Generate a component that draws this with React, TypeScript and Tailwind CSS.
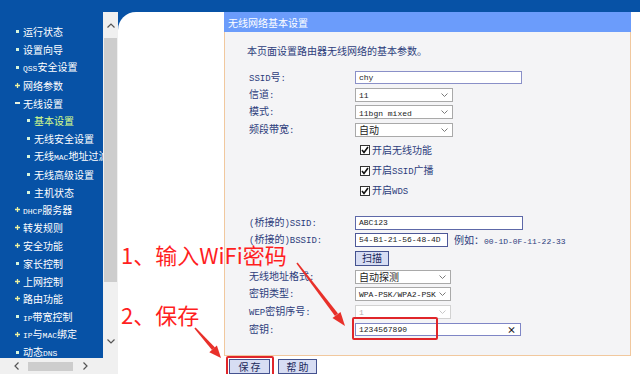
import React from "react";

type NavItem = { t: string; k: "dot" | "plus" | "minus" | "sub"; active?: boolean };

const nav: NavItem[] = [
  { t: "运行状态", k: "dot" },
  { t: "设置向导", k: "dot" },
  { t: "QSS安全设置", k: "dot" },
  { t: "网络参数", k: "plus" },
  { t: "无线设置", k: "minus" },
  { t: "基本设置", k: "sub", active: true },
  { t: "无线安全设置", k: "sub" },
  { t: "无线MAC地址过滤", k: "sub" },
  { t: "无线高级设置", k: "sub" },
  { t: "主机状态", k: "sub" },
  { t: "DHCP服务器", k: "plus" },
  { t: "转发规则", k: "plus" },
  { t: "安全功能", k: "plus" },
  { t: "家长控制", k: "dot" },
  { t: "上网控制", k: "plus" },
  { t: "路由功能", k: "plus" },
  { t: "IP带宽控制", k: "dot" },
  { t: "IP与MAC绑定", k: "plus" },
  { t: "动态DNS", k: "dot" },
];

function Mix({ s, latin }: { s: string; latin: string }) {
  const parts = s.split(/([\x20-\x7E]+)/).filter((p) => p.length > 0);
  return (
    <span className="whitespace-nowrap">
      {parts.map((p, i) =>
        /[\x20-\x7E]/.test(p) ? (
          <span key={i} className={latin + " whitespace-pre"}>
            {p}
          </span>
        ) : (
          <span key={i}>{p}</span>
        )
      )}
    </span>
  );
}

const LBL = "font-['Liberation_Mono',monospace] text-[9px]";
const INP = "font-['Liberation_Mono',monospace] text-[8px]";
const NAVL = "font-['Liberation_Mono',monospace] text-[8px]";

function Chevron({ color = "#7a7a7a" }: { color?: string }) {
  return (
    <svg width="7" height="4" viewBox="0 0 7 4" className="shrink-0">
      <polyline points="0.5,0.5 3.5,3.5 6.5,0.5" fill="none" stroke={color} strokeWidth="1" />
    </svg>
  );
}

function Check() {
  return (
    <span className="w-[10px] h-[10px] border border-[#333] bg-white flex items-center justify-center shrink-0 ml-[5px] mr-[2px]">
      <svg width="8" height="8" viewBox="0 0 8 8">
        <polyline points="1,4 3,6.5 7,1" fill="none" stroke="#111" strokeWidth="1.6" />
      </svg>
    </span>
  );
}

function Row({ h, label, children }: { h: string; label?: string; children?: React.ReactNode }) {
  return (
    <div className={"flex items-center " + h}>
      <div className="w-[108px] pl-[2px] shrink-0 whitespace-nowrap">{label ? <Mix s={label} latin={LBL} /> : null}</div>
      {children}
    </div>
  );
}

function Sel({ w, text, disabled }: { w: string; text: string; disabled?: boolean }) {
  return (
    <div
      className={
        w +
        " h-[14px] border bg-white flex items-center justify-between pl-[3px] pr-[4px] " +
        (disabled ? "border-[#d2d2d2] text-[#b0b0b0]" : "border-[#a9a9a9] text-[#222]")
      }
    >
      <span className="whitespace-nowrap leading-none">
        <Mix s={text} latin={INP} />
      </span>
      <Chevron color={disabled ? "#c8c8c8" : "#7a7a7a"} />
    </div>
  );
}

function Btn({ w, children }: { w: string; children: React.ReactNode }) {
  return (
    <div className={w + " h-[15px] bg-[#d7ddf3] border border-[#44528f] flex items-center justify-center text-[#1d2a5c] text-[10px] leading-none"}>
      {children}
    </div>
  );
}

export default function App() {
  return (
    <div className="relative w-[640px] h-[374px] overflow-hidden bg-[#0752a6] flex flex-col font-['Noto_Sans_CJK_SC',sans-serif]">
      <div className="h-[12px] shrink-0" />
      <div className="flex flex-1 min-h-0">
        {/* sidebar */}
        <div className="w-[103px] shrink-0 flex flex-col">
          <nav className="flex-1 overflow-hidden pt-[11px] text-[10px] text-white">
            {nav.map((n, i) => (
              <div key={i} className={"h-[17.8px] flex items-center whitespace-nowrap " + (n.k === "sub" ? "pl-[26px]" : "pl-[15px]")}>
                <span className="w-[8px] flex items-center shrink-0">
                  {n.k === "dot" || n.k === "sub" ? (
                    <span className="w-[3px] h-[3px] bg-[#d6f5dc] ml-[1px]" />
                  ) : n.k === "plus" ? (
                    <svg width="5" height="5" viewBox="0 0 5 5">
                      <path d="M2.5 0V5M0 2.5H5" stroke="#eef3a0" strokeWidth="1.3" />
                    </svg>
                  ) : (
                    <span className="w-[5px] h-[1.3px] bg-[#e8f3e0]" />
                  )}
                </span>
                <span className={n.active ? "text-[#d8ff8a]" : ""}>
                  <Mix s={n.t} latin={NAVL} />
                </span>
              </div>
            ))}
          </nav>
          <div className="h-[16px] shrink-0 bg-[#f0f0f0] flex items-center">
            <svg width="5" height="8" viewBox="0 0 5 8" className="ml-[14px]">
              <polyline points="4.5,0.5 1,4 4.5,7.5" fill="none" stroke="#555" strokeWidth="1.2" />
            </svg>
            <div className="ml-[9px] w-[45px] h-[9px] bg-[#cdcdcd]" />
            <svg width="5" height="8" viewBox="0 0 5 8" className="ml-[10px]">
              <polyline points="0.5,0.5 4,4 0.5,7.5" fill="none" stroke="#555" strokeWidth="1.2" />
            </svg>
          </div>
        </div>
        {/* vertical scrollbar */}
        <div className="w-[15px] shrink-0 flex flex-col bg-[#f0f0f0]">
          <div className="h-[26px] flex items-center justify-center">
            <svg width="8" height="5" viewBox="0 0 8 5">
              <polyline points="0.5,4.5 4,1 7.5,4.5" fill="none" stroke="#555" strokeWidth="1.2" />
            </svg>
          </div>
          <div className="h-[244px] mx-[1px] bg-[#cdcdcd]" />
          <div className="flex-1" />
          <div className="h-[22px] flex items-center justify-center">
            <svg width="8" height="5" viewBox="0 0 8 5">
              <polyline points="0.5,0.5 4,4 7.5,0.5" fill="none" stroke="#555" strokeWidth="1.2" />
            </svg>
          </div>
          <div className="h-[22px]" />
        </div>
        {/* main */}
        <div className="flex-1 bg-white rounded-tl-[18px] flex">
          <div className="w-[106px] shrink-0" />
          <div className="w-[407px] shrink-0 flex flex-col">
            <div className="h-[20px] bg-[#6b9cfb] text-white text-[10px] flex items-center pl-[4px] shrink-0">无线网络基本设置</div>
            <div className="h-[324px] shrink-0 border-x border-b border-[#f1c89e] bg-[#f4f4f6] pl-[22px] flex flex-col text-[10px] text-[#2d3d7c]">
              <div className="h-[18px] mt-[9px] flex items-center">本页面设置路由器无线网络的基本参数。</div>
              <div className="h-[10px]" />
              <Row h="h-[17px]" label="SSID号:">
                <div className="w-[167px] h-[13px] border border-[#8a90c8] bg-white flex items-center pl-[3px] text-[#222]">
                  <span className={INP}>chy</span>
                </div>
              </Row>
              <Row h="h-[17px]" label="信道:">
                <Sel w="w-[98px]" text="11" />
              </Row>
              <Row h="h-[18px]" label="模式:">
                <Sel w="w-[98px]" text="11bgn mixed" />
              </Row>
              <Row h="h-[18px]" label="频段带宽:">
                <Sel w="w-[98px]" text="自动" />
              </Row>
              <Row h="h-[21px]">
                <Check />
                <span>开启无线功能</span>
              </Row>
              <Row h="h-[21px]">
                <Check />
                <span>
                  <Mix s="开启SSID广播" latin={LBL} />
                </span>
              </Row>
              <Row h="h-[20px]">
                <Check />
                <span>
                  <Mix s="开启WDS" latin={LBL} />
                </span>
              </Row>
              <div className="h-[13px]" />
              <Row h="h-[17px]" label="(桥接的)SSID:">
                <div className="w-[168px] h-[14px] border border-[#5d68a8] bg-white flex items-center pl-[3px] text-[#222]">
                  <span className={INP}>ABC123</span>
                </div>
              </Row>
              <Row h="h-[17px]" label="(桥接的)BSSID:">
                <div className="w-[93px] h-[14px] border border-[#4d5898] bg-white flex items-center pl-[3px] text-[#222]">
                  <span className={INP}>54-B1-21-56-48-4D</span>
                </div>
                <span className="ml-[6px] whitespace-nowrap">
                  <Mix s="例如：00-1D-0F-11-22-33" latin={INP} />
                </span>
              </Row>
              <Row h="h-[20px]">
                <Btn w="w-[34px]">扫描</Btn>
              </Row>
              <Row h="h-[17px]" label="无线地址格式:">
                <Sel w="w-[96px]" text="自动探测" />
              </Row>
              <Row h="h-[17px]" label="密钥类型:">
                <Sel w="w-[96px]" text="WPA-PSK/WPA2-PSK" />
              </Row>
              <Row h="h-[19px]" label="WEP密钥序号:">
                <Sel w="w-[96px]" text="1" disabled />
              </Row>
              <Row h="h-[17px]" label="密钥:">
                <div className="w-[166px] h-[13px] border border-[#7f86c6] bg-white flex items-center justify-between pl-[3px] pr-[4px] text-[#222]">
                  <span className={INP}>1234567890</span>
                  <span className="text-[9px] font-bold leading-none text-[#222]">×</span>
                </div>
              </Row>
            </div>
            <div className="flex gap-[8px] pl-[5px] mt-[3px]">
              <Btn w="w-[41px]">保&nbsp;存</Btn>
              <Btn w="w-[39px]">帮&nbsp;助</Btn>
            </div>
          </div>
        </div>
      </div>

      {/* annotations */}
      <div className="absolute left-[121px] top-[243px] text-[22px] leading-none text-[#ff1f1f] whitespace-nowrap">1、输入WiFi密码</div>
      <div className="absolute left-[121px] top-[303px] text-[22px] leading-none text-[#ff1f1f] whitespace-nowrap">2、保存</div>
      <div className="absolute left-[352px] top-[317px] w-[86px] h-[23px] border-2 border-[#e0262a] rounded-[2px]" />
      <div className="absolute left-[226px] top-[356px] w-[48px] h-[22px] border-2 border-[#e0262a] rounded-[2px]" />
      <svg className="absolute left-0 top-0 pointer-events-none" width="640" height="374" viewBox="0 0 640 374">
        <polygon points="296.4,263.4 297.6,262.6 338,313.6 335,316" fill="#e8302a" />
        <polygon points="345,326 332.5,317.9 340.5,311.9" fill="#e8302a" />
        <polygon points="194.4,328.4 195.6,327.6 215,347.5 212,350" fill="#e8302a" />
        <polygon points="221,358 209.3,352.2 216.9,345.6" fill="#e8302a" />
      </svg>
    </div>
  );
}
